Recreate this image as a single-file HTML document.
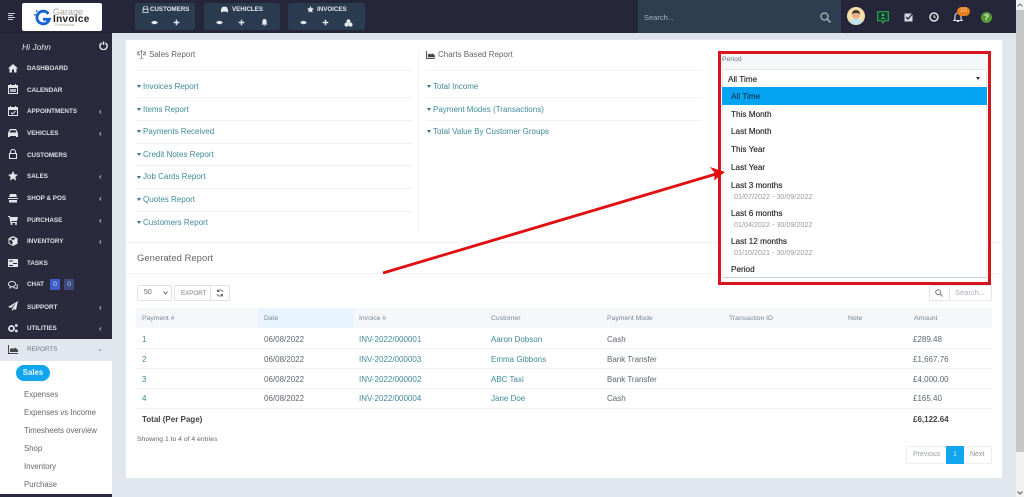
<!DOCTYPE html>
<html><head><meta charset="utf-8"><title>Reports</title>
<style>
*{box-sizing:border-box}
html,body{margin:0;padding:0}
body{width:1024px;height:497px;overflow:hidden;position:relative;background:#e2e6ee;font-family:"Liberation Sans",sans-serif;font-size:8px;color:#555}
div,span,svg{position:absolute}
#w{left:0;top:0;width:1024px;height:497px;filter:blur(.3px)}
.t{white-space:nowrap;line-height:12px;margin-top:1px}
.b{margin-top:0}
.side{color:#dfe0e6;font-size:6.300px;font-weight:bold;left:27px}
.chev{color:#c8c9d0;font-size:8px;left:99px;font-weight:bold}
.ico{left:8px;width:10px;height:10px;fill:#e4e5ea}
.sub{color:#666;font-size:7.800px;left:24px}
.lk{color:#3f8a9c;font-size:8px}
.car{width:0;height:0;border-left:2.500px solid transparent;border-right:2.500px solid transparent;border-top:3px solid #2f7485}
.ln{height:1px;background:#f0f1f3}
.tb{color:#e6e9ee;font-size:6.200px;font-weight:bold}
.th{color:#7b8794;font-size:6.800px}
.td{color:#5d6670;font-size:8px}
.a{color:#3f8a9c;font-size:8px}
.op{color:#333;font-size:8.200px;left:731px;text-shadow:0 0 .5px #333}
.dt{color:#9a9a9a;font-size:7.200px;left:734px}
.wi{width:7px;height:7px;fill:#e6e9ee}
</style></head><body><div id="w">

<!-- top bar -->
<div style="left:0;top:0;width:1016px;height:33px;background:#26263a"></div>
<div style="left:112px;top:33px;width:904px;height:6px;background:#dde1e9"></div>
<svg style="left:8px;top:13px;width:7px;height:7px" viewBox="0 0 7 7"><path d="M0 .5h7M0 2.500h5M0 4.500h7M0 6.500h5" stroke="#c9ccd4" stroke-width="1"/></svg>

<!-- logo -->
<div style="left:22px;top:3px;width:80px;height:28px;background:#fff;border-radius:2px"></div>
<svg style="left:34px;top:8px;width:18px;height:19px" viewBox="0 0 20 20"><path d="M16 6A7 7 0 1 0 17 12H10" fill="none" stroke="#1565d8" stroke-width="3.200"/><circle cx="3" cy="3" r="1" fill="#1565d8"/><circle cx="1" cy="7" r="1" fill="#1565d8"/></svg>
<div class="t" style="left:53px;top:4.500px;color:#a5a5a5;font-size:9px">Garage</div>
<div class="t" style="left:53px;top:12.500px;color:#222;font-size:10px;font-weight:bold;letter-spacing:.3px">Invoice</div>
<div class="t" style="left:55px;top:18px;color:#aaa;font-size:3.500px">Professional</div>

<!-- quick groups -->
<div style="left:135px;top:3px;width:60px;height:27px;background:#2b3b50;border-radius:2px"></div>
<div style="left:204px;top:3px;width:76px;height:27px;background:#2b3b50;border-radius:2px"></div>
<div style="left:288px;top:3px;width:77px;height:27px;background:#2b3b50;border-radius:2px"></div>
<svg class="wi" style="left:142px;top:6px" viewBox="0 0 10 10"><path d="M2 4V3a3 3 0 0 1 6 0v1M1.500 4.500h7v5h-7z" fill="none" stroke="#e6e9ee" stroke-width="1.200"/></svg>
<div class="t tb" style="left:150px;top:3px">CUSTOMERS</div>
<svg class="wi" style="left:221px;top:6px" viewBox="0 0 10 10"><path d="M2 1h6l2 4v4H8V8H2v1H0V5z"/></svg>
<div class="t tb" style="left:232px;top:3px">VEHICLES</div>
<svg class="wi" style="left:307px;top:6px" viewBox="0 0 10 10"><path d="M5 0l1.500 3.300 3.500.4-2.600 2.300.7 3.500L5 7.800 1.900 9.500l.7-3.500L0 3.700l3.500-.4z"/></svg>
<div class="t tb" style="left:317px;top:3px">INVOICES</div>
<svg class="wi" style="left:151px;top:19px" viewBox="0 0 10 10"><path d="M0 5q5-5 10 0q-5 5-10 0z"/></svg>
<svg class="wi" style="left:173px;top:19px" viewBox="0 0 10 10"><path d="M4 1h2v3h3v2H6v3H4V6H1V4h3z"/></svg>
<svg class="wi" style="left:216px;top:19px" viewBox="0 0 10 10"><path d="M0 5q5-5 10 0q-5 5-10 0z"/></svg>
<svg class="wi" style="left:238px;top:19px" viewBox="0 0 10 10"><path d="M4 1h2v3h3v2H6v3H4V6H1V4h3z"/></svg>
<svg class="wi" style="left:261px;top:19px" viewBox="0 0 10 10"><path d="M5 0a3 3 0 0 1 3 3v3l1 2H1l1-2V3a3 3 0 0 1 3-3zM4 9h2v1H4z"/></svg>
<svg class="wi" style="left:300px;top:19px" viewBox="0 0 10 10"><path d="M0 5q5-5 10 0q-5 5-10 0z"/></svg>
<svg class="wi" style="left:322px;top:19px" viewBox="0 0 10 10"><path d="M4 1h2v3h3v2H6v3H4V6H1V4h3z"/></svg>
<svg class="wi" style="left:344px;top:19px;width:9px;height:8px" viewBox="0 0 10 10"><circle cx="5" cy="3" r="2.500"/><circle cx="2.500" cy="7" r="2.500"/><circle cx="7.500" cy="7" r="2.500"/></svg>

<!-- search -->
<div style="left:638px;top:0;width:203px;height:33px;background:#2d3e50"></div>
<div class="t" style="left:644px;top:10.500px;color:#a9b4c0;font-size:7.500px">Search...</div>
<svg style="left:820px;top:12px;width:11px;height:11px" viewBox="0 0 11 11"><circle cx="4.500" cy="4.500" r="3.500" fill="none" stroke="#9aa6b0" stroke-width="1.500"/><path d="M7 7l3.500 3.500" stroke="#9aa6b0" stroke-width="1.700"/></svg>

<!-- right icons -->
<svg style="left:847px;top:7px;width:18px;height:18px" viewBox="0 0 18 18"><circle cx="9" cy="9" r="9" fill="#f5dfa8"/><path d="M2 14q7-5 14 0a9 9 0 0 1-14 0z" fill="#bfe3ef"/><circle cx="9" cy="8" r="4" fill="#e8b188"/><path d="M5 7q0-4 4-4t4 4q-4-2-8 0z" fill="#4a3a30"/></svg>
<svg style="left:877px;top:11px;width:12px;height:13px" viewBox="0 0 12 13"><path d="M.700.700h10.600v9H7.500L6 12 4.500 9.700H.700z" fill="#123d2c" stroke="#2fa35a" stroke-width="1.200"/><circle cx="6" cy="4" r="1.300" fill="#3fbf6c"/><path d="M3.500 8q2.500-3 5 0z" fill="#3fbf6c"/></svg>
<svg style="left:904px;top:12px;width:10px;height:10px" viewBox="0 0 10 10"><path d="M.500 1.500h8v8h-8z" fill="#d8dae0"/><path d="M2 5l2 2 5-6" fill="none" stroke="#26263a" stroke-width="1.300"/></svg>
<svg style="left:929px;top:12px;width:10px;height:10px" viewBox="0 0 10 10"><circle cx="5" cy="5" r="4" fill="none" stroke="#e3e5ea" stroke-width="1.500"/><path d="M5 3v2.300h1.800" fill="none" stroke="#e3e5ea" stroke-width="1"/></svg>
<svg style="left:953px;top:12px;width:10px;height:11px" viewBox="0 0 10 11"><path d="M5 1a3 3 0 0 1 3 3v3l1.200 1.500H.800L2 7V4a3 3 0 0 1 3-3zM4 9.500h2" fill="none" stroke="#e3e5ea" stroke-width="1.100"/></svg>
<div class="t b" style="left:957px;top:7px;width:13px;height:9px;border-radius:4.500px;background:#e67e1e;color:#f6d7a8;font-size:6px;line-height:9px;text-align:center">10</div>
<div class="t b" style="left:981px;top:12px;width:11px;height:11px;border-radius:50%;background:#5a9a35;color:#eef5df;font-size:8.500px;font-weight:bold;line-height:11px;text-align:center">?</div>

<!-- sidebar -->
<div style="left:0;top:33px;width:112px;height:464px;background:#2a2a3c"></div>
<div class="t" style="left:22px;top:39.500px;color:#e6e7ec;font-size:8.500px;font-style:italic">Hi John</div>
<svg style="left:99px;top:41px;width:9px;height:9px" viewBox="0 0 10 10"><path d="M3 2.200a4 4 0 1 0 4 0M5 .500v4" fill="none" stroke="#e8e8ec" stroke-width="1.600"/></svg>

<svg class="ico" style="top:63px" viewBox="0 0 10 10"><path d="M5 1l5 4.500H8.500V9.500H6V6.500H4v3H1.500V5.500H0z"/></svg>
<div class="t side" style="top:62px">DASHBOARD</div>
<svg class="ico" style="top:84px" viewBox="0 0 10 10"><path d="M2 0h1v1h4V0h1v1h2v9H0V1h2zM1 4v5h8V4z"/><path d="M2 5h6v3H2z" opacity=".7"/></svg>
<div class="t side" style="top:83.500px">CALENDAR</div>
<svg class="ico" style="top:106px" viewBox="0 0 10 10"><path d="M2 0h1v1h4V0h1v1h2v9H0V1h2zM1 4v5h8V4z"/><path d="M3 6.500l1.500 1.500 3-3" fill="none" stroke="#e4e5ea"/></svg>
<div class="t side" style="top:105px">APPOINTMENTS</div><div class="t chev" style="top:105px">‹</div>
<svg class="ico" style="top:128px" viewBox="0 0 10 10"><path d="M2 1h6l2 4v4H8V8H2v1H0V5zM2.500 2.200L1.700 4.500h6.600l-.8-2.300z" fill-rule="evenodd"/></svg>
<div class="t side" style="top:127px">VEHICLES</div><div class="t chev" style="top:127px">‹</div>
<svg class="ico" style="top:149px" viewBox="0 0 10 10"><path d="M2.500 4V3a2.500 2.500 0 0 1 5 0v1M1.500 4.500h7v5h-7z" fill="none" stroke="#e4e5ea" stroke-width="1.100"/></svg>
<div class="t side" style="top:148.500px">CUSTOMERS</div>
<svg class="ico" style="top:171px" viewBox="0 0 10 10"><path d="M5 0l1.500 3.300 3.500.4-2.600 2.300.7 3.500L5 7.800 1.900 9.500l.7-3.500L0 3.700l3.500-.4z"/></svg>
<div class="t side" style="top:170px">SALES</div><div class="t chev" style="top:170px">‹</div>
<svg class="ico" style="top:193px" viewBox="0 0 10 10"><path d="M2 1h6l1 3H1zM0 5h10v1H0zM1 7h8v2.500H1z"/></svg>
<div class="t side" style="top:192px">SHOP &amp; POS</div><div class="t chev" style="top:192px">‹</div>
<svg class="ico" style="top:214.500px" viewBox="0 0 10 10"><path d="M0 1h2l.5 1H10L9 6H3.300l.2 1H9v1H2.500L1.200 2H0z"/><circle cx="3.500" cy="9" r="1"/><circle cx="8" cy="9" r="1"/></svg>
<div class="t side" style="top:213.500px">PURCHASE</div><div class="t chev" style="top:213.500px">‹</div>
<svg class="ico" style="top:236px" viewBox="0 0 10 10"><path d="M5 0l4.500 2.200v5.600L5 10 .500 7.800V2.200zM5 1.500L2.500 2.700 5 4l2.500-1.300zM4.500 5L1.500 3.500v3.700l3 1.500z" fill-rule="evenodd"/></svg>
<div class="t side" style="top:235px">INVENTORY</div><div class="t chev" style="top:235px">‹</div>
<svg class="ico" style="top:258px" viewBox="0 0 10 10"><path d="M0 1h10v8H0zM1 2.500v1h4v-1zM5 5v1h4V5zM1 7v1h4V7z" fill-rule="evenodd"/></svg>
<div class="t side" style="top:257px">TASKS</div>
<svg class="ico" style="top:279.500px" viewBox="0 0 10 10"><path d="M4 1.500c2 0 3.500 1 3.500 2.500S6 6.500 4 6.500L2 8V6C1 5.500.500 5 .500 4 .500 2.500 2 1.500 4 1.500z" fill="none" stroke="#e4e5ea"/><path d="M8.500 4.500c1 .5 1.300 2 .5 3v1L7.500 8C6.500 8 5.500 7.800 5 7.300" fill="none" stroke="#e4e5ea"/></svg>
<div class="t side" style="top:277.500px">CHAT</div>
<div class="t b" style="left:50px;top:279px;width:10px;height:11px;background:#3f5fc8;border-radius:1px;color:#cfd9f5;font-size:6.500px;line-height:11px;text-align:center">0</div>
<div class="t b" style="left:64px;top:279px;width:10px;height:11px;background:#3e4a80;border-radius:1px;color:#cfd3e8;font-size:6.500px;line-height:11px;text-align:center">0</div>
<svg class="ico" style="top:301px" viewBox="0 0 10 10"><path d="M10 0L0 6l3 1 5-5-4 6v2l2-2 2 1z"/></svg>
<div class="t side" style="top:300.500px">SUPPORT</div><div class="t chev" style="top:300.500px">‹</div>
<svg class="ico" style="top:323px" viewBox="0 0 10 10"><circle cx="3.500" cy="5.500" r="2.500" fill="none" stroke="#e4e5ea" stroke-width="1.800"/><circle cx="8.300" cy="2.500" r="1.400"/><circle cx="8.300" cy="8" r="1.400"/></svg>
<div class="t side" style="top:322px">UTILITIES</div><div class="t chev" style="top:322px">‹</div>

<div style="left:0;top:339px;width:112px;height:22px;background:#e2e6ee"></div>
<svg style="left:8px;top:345px;width:10px;height:9px" viewBox="0 0 10 9"><path d="M0 0h1v8h9v1H0zM2 7V4l2-1 1.500 1L7 2.500 10 5v2z" fill="#444"/></svg>
<div class="t" style="left:27px;top:343px;color:#6f7680;font-size:6.300px">REPORTS</div>
<div class="t" style="left:97px;top:343px;color:#7a8088;font-size:7px">⌄</div>
<div style="left:0;top:361px;width:112px;height:133px;background:#fff"></div>
<div class="t b" style="left:16px;top:365px;width:34px;height:16px;border-radius:8px;background:#11a5ee;color:#e8f6fd;font-size:7.800px;font-weight:bold;line-height:16px;text-align:center">Sales</div>
<div class="t sub" style="top:387.500px">Expenses</div>
<div class="t sub" style="top:405.500px">Expenses vs Income</div>
<div class="t sub" style="top:423.500px">Timesheets overview</div>
<div class="t sub" style="top:442px">Shop</div>
<div class="t sub" style="top:460px">Inventory</div>
<div class="t sub" style="top:478px">Purchase</div>

<!-- panel -->
<div style="left:126px;top:40px;width:876px;height:438px;background:#fff"></div>

<svg style="left:137px;top:50px;width:9px;height:9px" viewBox="0 0 10 10"><path d="M5 0v9M3 9.500h4M1 2h8M1 2L0 5.500h3zM9 2L7 5.500h3z" fill="none" stroke="#777" stroke-width=".8"/></svg>
<div class="t" style="left:149px;top:48px;color:#666;font-size:8px">Sales Report</div>
<div class="ln" style="left:136px;top:70px;width:276px"></div>
<div class="car" style="left:136.500px;top:85px"></div><div class="t lk" style="left:143px;top:80px">Invoices Report</div>
<div class="ln" style="left:136px;top:97px;width:276px"></div>
<div class="car" style="left:136.500px;top:107.500px"></div><div class="t lk" style="left:143px;top:102.500px">Items Report</div>
<div class="ln" style="left:136px;top:120px;width:276px"></div>
<div class="car" style="left:136.500px;top:130px"></div><div class="t lk" style="left:143px;top:125px">Payments Received</div>
<div class="ln" style="left:136px;top:143px;width:276px"></div>
<div class="car" style="left:136.500px;top:153px"></div><div class="t lk" style="left:143px;top:147.500px">Credit Notes Report</div>
<div class="ln" style="left:136px;top:165px;width:276px"></div>
<div class="car" style="left:136.500px;top:175.500px"></div><div class="t lk" style="left:143px;top:170px">Job Cards Report</div>
<div class="ln" style="left:136px;top:188px;width:276px"></div>
<div class="car" style="left:136.500px;top:198px"></div><div class="t lk" style="left:143px;top:193px">Quotes Report</div>
<div class="ln" style="left:136px;top:211px;width:276px"></div>
<div class="car" style="left:136.500px;top:220.500px"></div><div class="t lk" style="left:143px;top:215.500px">Customers Report</div>
<div style="left:418px;top:50px;width:1px;height:182px;background:#f3f4f6"></div>

<svg style="left:426px;top:50.500px;width:9px;height:8px" viewBox="0 0 10 9"><path d="M0 0h1v8h9v1H0zM2 7V4l2-1 1.500 1L7 2.500 10 5v2z" fill="#444"/></svg>
<div class="t" style="left:438px;top:48px;color:#666;font-size:8px">Charts Based Report</div>
<div class="ln" style="left:426px;top:70px;width:276px"></div>
<div class="car" style="left:426.500px;top:85px"></div><div class="t lk" style="left:433px;top:80px">Total Income</div>
<div class="ln" style="left:426px;top:97px;width:276px"></div>
<div class="car" style="left:426.500px;top:107.500px"></div><div class="t lk" style="left:433px;top:102.500px">Payment Modes (Transactions)</div>
<div class="ln" style="left:426px;top:120px;width:276px"></div>
<div class="car" style="left:426.500px;top:130px"></div><div class="t lk" style="left:433px;top:125px">Total Value By Customer Groups</div>

<div class="ln" style="left:126px;top:242px;width:876px"></div>
<div class="t" style="left:137px;top:251.500px;color:#666;font-size:9.500px">Generated Report</div>
<div class="ln" style="left:126px;top:273px;width:876px"></div>

<!-- table controls -->
<div style="left:137px;top:285px;width:35px;height:16px;border:1px solid #dfe3e8;border-radius:2px"></div>
<div class="t" style="left:144px;top:286px;color:#666;font-size:7px">50</div>
<svg style="left:163px;top:291px;width:5px;height:4px" viewBox="0 0 5 4"><path d="M.500.500L2.500 3 4.500.500" fill="none" stroke="#666"/></svg>
<div style="left:174px;top:285px;width:56px;height:16px;border:1px solid #dfe3e8;border-radius:2px"></div>
<div style="left:210px;top:285px;width:1px;height:16px;background:#dfe3e8"></div>
<div class="t" style="left:181px;top:287px;color:#777;font-size:6.200px">EXPORT</div>
<svg style="left:216px;top:289px;width:8px;height:8px" viewBox="0 0 8 8"><path d="M7 3A3 3 0 0 0 1.500 2.500M1 5a3 3 0 0 0 5.500.500M1.500.500v2h2M6.500 7.500v-2h-2" fill="none" stroke="#666" stroke-width=".9"/></svg>

<div style="left:929px;top:285px;width:63px;height:16px;border:1px solid #e3e6eb;border-radius:2px"></div>
<div style="left:949px;top:285px;width:1px;height:16px;background:#e3e6eb"></div>
<svg style="left:935px;top:289px;width:8px;height:8px" viewBox="0 0 8 8"><circle cx="3.200" cy="3.200" r="2.500" fill="none" stroke="#777"/><path d="M5 5l2.500 2.500" stroke="#777"/></svg>
<div class="t" style="left:955px;top:286px;color:#a8b0ba;font-size:7.500px">Search...</div>

<!-- table -->
<div style="left:136px;top:308px;width:856px;height:20px;background:#f5f7fa"></div>
<div style="left:258px;top:308px;width:96px;height:20px;background:#e8f4fd"></div>
<div class="t th" style="left:142px;top:311.500px">Payment #</div>
<div class="t th" style="left:264px;top:311.500px">Date</div>
<div class="t th" style="left:359px;top:311.500px">Invoice #</div>
<div class="t th" style="left:491px;top:311.500px">Customer</div>
<div class="t th" style="left:607px;top:311.500px">Payment Mode</div>
<div class="t th" style="left:729px;top:311.500px">Transaction ID</div>
<div class="t th" style="left:848px;top:311.500px">Note</div>
<div class="t th" style="left:914px;top:311.500px">Amount</div>

<div class="ln" style="left:136px;top:348px;width:856px"></div>
<div class="ln" style="left:136px;top:368px;width:856px"></div>
<div class="ln" style="left:136px;top:388px;width:856px"></div>
<div class="ln" style="left:136px;top:408px;width:856px"></div>

<div class="t a" style="left:142px;top:333px">1</div><div class="t td" style="left:264px;top:333px">06/08/2022</div><div class="t a" style="left:359px;top:333px">INV-2022/000001</div><div class="t a" style="left:491px;top:333px">Aaron Dobson</div><div class="t td" style="left:607px;top:333px">Cash</div><div class="t td" style="left:913px;top:333px">£289.48</div>
<div class="t a" style="left:142px;top:353px">2</div><div class="t td" style="left:264px;top:353px">06/08/2022</div><div class="t a" style="left:359px;top:353px">INV-2022/000003</div><div class="t a" style="left:491px;top:353px">Emma Gibbons</div><div class="t td" style="left:607px;top:353px">Bank Transfer</div><div class="t td" style="left:913px;top:353px">£1,667.76</div>
<div class="t a" style="left:142px;top:373px">3</div><div class="t td" style="left:264px;top:373px">06/08/2022</div><div class="t a" style="left:359px;top:373px">INV-2022/000002</div><div class="t a" style="left:491px;top:373px">ABC Taxi</div><div class="t td" style="left:607px;top:373px">Bank Transfer</div><div class="t td" style="left:913px;top:373px">£4,000.00</div>
<div class="t a" style="left:142px;top:392px">4</div><div class="t td" style="left:264px;top:392px">06/08/2022</div><div class="t a" style="left:359px;top:392px">INV-2022/000004</div><div class="t a" style="left:491px;top:392px">Jane Doe</div><div class="t td" style="left:607px;top:392px">Cash</div><div class="t td" style="left:913px;top:392px">£165.40</div>
<div class="t" style="left:142px;top:412.500px;color:#444;font-size:8px;font-weight:bold">Total (Per Page)</div>
<div class="t" style="left:913px;top:412.500px;color:#444;font-size:8px;font-weight:bold">£6,122.64</div>
<div class="t" style="left:137px;top:433px;color:#666;font-size:6.800px">Showing 1 to 4 of 4 entries</div>

<!-- pagination -->
<div style="left:906px;top:446px;width:86px;height:18px;border:1px solid #eceef1;border-radius:2px"></div>
<div class="t" style="left:913px;top:448px;color:#9aa0a8;font-size:7px">Previous</div>
<div class="t b" style="left:946px;top:446px;width:18px;height:18px;background:#11a5ee;color:#d8f1fd;font-size:7px;line-height:18px;text-align:center">1</div>
<div class="t" style="left:970px;top:448px;color:#8d949c;font-size:7px">Next</div>

<!-- period dropdown -->
<div style="left:720px;top:53px;width:269px;height:231px;background:#fff"></div>
<div style="left:720px;top:53px;width:269px;height:16px;background:#f5f7f9"></div>
<div class="t" style="left:722px;top:53px;color:#6b7480;font-size:6.800px">Period</div>
<div style="left:722px;top:69px;width:265px;height:18px;background:#fff;border:1px solid #e3e6ea;border-bottom:0"></div>
<div class="t" style="left:728px;top:72.500px;color:#333;font-size:8.200px;text-shadow:0 0 .4px #333">All Time</div>
<div class="car" style="left:976px;top:77px;border-top-color:#333"></div>
<div style="left:722px;top:87px;width:265px;height:18px;background:#04a4f2"></div>
<div style="left:722px;top:105px;width:265px;height:173px;border:1px solid #eceef1;border-top:0;border-bottom:1px solid #c9d0d6"></div>
<div class="t op" style="top:89.500px;color:#14466a;text-shadow:0 0 .5px #14466a">All Time</div>
<div class="t op" style="top:107.500px">This Month</div>
<div class="t op" style="top:125px">Last Month</div>
<div class="t op" style="top:143px">This Year</div>
<div class="t op" style="top:161px">Last Year</div>
<div class="t op" style="top:179px">Last 3 months</div>
<div class="t dt" style="top:190px">01/07/2022 - 30/09/2022</div>
<div class="t op" style="top:207px">Last 6 months</div>
<div class="t dt" style="top:218px">01/04/2022 - 30/09/2022</div>
<div class="t op" style="top:235px">Last 12 months</div>
<div class="t dt" style="top:246px">01/10/2021 - 30/09/2022</div>
<div class="t op" style="top:263px">Period</div>

<!-- red annotation -->
<div style="left:718px;top:51px;width:273px;height:234px;border:3px solid #d8141c"></div>
<svg style="left:0;top:0;width:1024px;height:497px" viewBox="0 0 1024 497"><path d="M383 273L716 174" stroke="#df0f12" stroke-width="2.800" fill="none"/><path d="M725 172L710 167 715 173.500 714 180.500z" fill="#e90c0c"/></svg>

<!-- scrollbar -->
<div style="left:1016px;top:0;width:8px;height:497px;background:#f1f1f1"></div>
<div style="left:1016px;top:10px;width:8px;height:442px;background:#c6c6c6"></div>
<svg style="left:1017px;top:3px;width:6px;height:4px" viewBox="0 0 6 4"><path d="M.500 3.500L3 1l2.500 2.500" fill="none" stroke="#777"/></svg>
<svg style="left:1017px;top:491px;width:6px;height:4px" viewBox="0 0 6 4"><path d="M.500.500L3 3 5.500.500" fill="none" stroke="#555"/></svg>
</div></body></html>
